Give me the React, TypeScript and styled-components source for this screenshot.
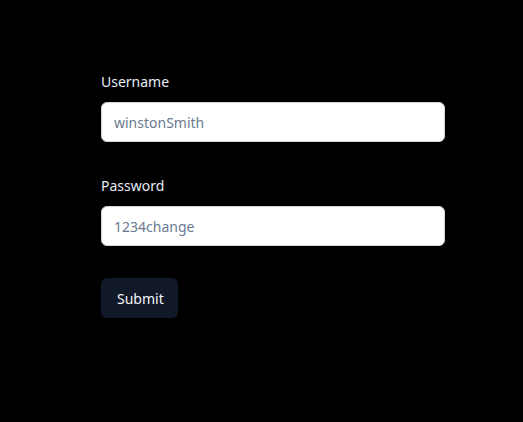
import styled, { createGlobalStyle } from 'styled-components';

const GlobalStyle = createGlobalStyle`
  html, body {
    margin: 0;
    padding: 0;
    background: #000000;
    font-family: 'Noto Sans', 'Open Sans', sans-serif;
  }
`;

const Page = styled.div`
  width: 523px;
  height: 422px;
  background: #000000;
  box-sizing: border-box;
  padding: 72px 0 0 101px;
`;

const Form = styled.form`
  width: 344px;
  display: flex;
  flex-direction: column;
`;

const Field = styled.div`
  display: flex;
  flex-direction: column;
  gap: 10px;
  margin-bottom: 34px;

  &:last-of-type {
    margin-bottom: 32px;
  }
`;

const Label = styled.label`
  font-size: 14px;
  line-height: 20px;
  color: #e5edf5;
`;

const Input = styled.input`
  box-sizing: border-box;
  height: 40px;
  width: 100%;
  padding: 0 12px;
  border: 1px solid #d1d5db;
  border-radius: 6px;
  background: #ffffff;
  font-family: inherit;
  font-size: 14px;
  color: #111827;
  outline: none;

  &::placeholder {
    color: #6b7a90;
  }
`;

const SubmitButton = styled.button`
  align-self: flex-start;
  box-sizing: border-box;
  height: 40px;
  width: 77px;
  padding: 0 16px;
  border: none;
  border-radius: 6px;
  background: #111827;
  color: #f3f6fa;
  font-family: inherit;
  font-size: 14px;
`;

export default function App() {
  return (
    <Page>
      <GlobalStyle />
      <Form onSubmit={(e) => e.preventDefault()}>
        <Field>
          <Label htmlFor="username">Username</Label>
          <Input id="username" type="text" placeholder="winstonSmith" />
        </Field>
        <Field>
          <Label htmlFor="password">Password</Label>
          <Input id="password" type="text" placeholder="1234change" />
        </Field>
        <SubmitButton type="submit">Submit</SubmitButton>
      </Form>
    </Page>
  );
}
